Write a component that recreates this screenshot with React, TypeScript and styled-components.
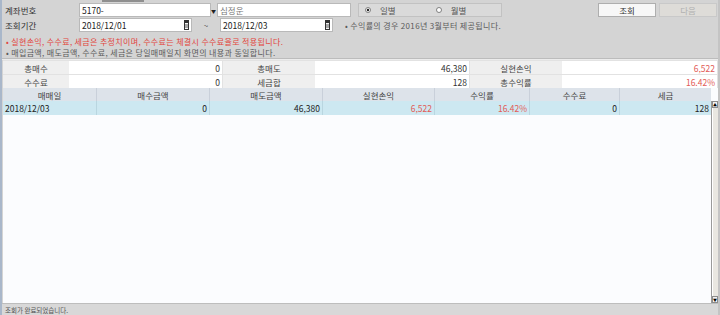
import React from "react";
import styled, { createGlobalStyle } from "styled-components";

const GlobalStyle = createGlobalStyle`
	html, body {
		margin: 0;
		padding: 0;
		background: #d4d4d4;
	}
	body {
		font-family: "Noto Sans CJK KR", "Noto Sans", sans-serif;
		font-size: 8px;
		color: #444;
	}
`;

const Window = styled.div`
	position: relative;
	width: 720px;
	height: 315px;
	display: flex;
	flex-direction: column;
	background: #d4d4d4;
	border-left: 2px solid #a9b7ca;
	border-right: 2px solid #c4c4c4;
	box-sizing: border-box;
	overflow: hidden;
`;

const TopTab = styled.div`
	position: absolute;
	top: 0;
	left: 100px;
	width: 42px;
	height: 2px;
	background: #8f8f8f;
`;

const TopPanel = styled.div`
	display: flex;
	flex-direction: column;
	padding: 3px 0 0 2px;
	height: 59px;
	flex-shrink: 0;
	border-bottom: 1px solid #bcbcbc;
	box-shadow: 0 1px 0 #ececec;
	box-sizing: border-box;
`;

const Row = styled.div`
	display: flex;
	align-items: center;
	height: 14px;
	margin-bottom: 1px;
`;

const Label = styled.div`
	width: 74px;
	font-size: 8.5px;
	color: #333;
	padding-left: 1px;
`;

const Input = styled.div<{ w: number; muted?: boolean }>`
	width: ${({ w }) => w}px;
	height: 14px;
	background: #fff;
	border: 1px solid #b9b9b9;
	box-sizing: border-box;
	display: flex;
	align-items: center;
	justify-content: space-between;
	padding: 0 2px;
	color: ${({ muted }) => (muted ? "#777" : "#222")};
	font-size: 8.5px;
`;

const DropBtn = styled.div`
	width: 5px;
	height: 14px;
	display: flex;
	align-items: center;
	justify-content: center;
	font-size: 5px;
	color: #222;
	margin-right: 1px;
`;

const RadioBox = styled.div`
	width: 144px;
	height: 14px;
	margin-left: 7px;
	background: #dadada;
	border: 1px solid #c2c2c2;
	box-sizing: border-box;
	display: flex;
	align-items: center;
	padding-left: 6px;
	gap: 40px;
`;

const Radio = styled.div`
	display: flex;
	align-items: center;
	gap: 9px;
	color: #555;
	font-size: 8.5px;
`;

const Spacer = styled.div`
	flex: 1;
`;

const Button = styled.div<{ disabled?: boolean }>`
	width: 58px;
	height: 14px;
	margin-left: 3px;
	box-sizing: border-box;
	border: 1px solid ${({ disabled }) => (disabled ? "#c9c9c9" : "#aeaeae")};
	background: ${({ disabled }) => (disabled ? "#dedcd8" : "#f7f7f7")};
	color: ${({ disabled }) => (disabled ? "#b0b0b0" : "#333")};
	display: flex;
	align-items: center;
	justify-content: center;
	font-size: 8.5px;
	&:last-child {
		margin-right: 1px;
	}
`;

const Tilde = styled.div`
	width: 28px;
	text-align: center;
	color: #555;
`;

const Note = styled.div<{ red?: boolean }>`
	color: ${({ red }) => (red ? "#e2453c" : "#5a5a5a")};
	font-size: 8px;
	line-height: 11px;
	letter-spacing: 0.35px;
	white-space: nowrap;
`;

const NoteLine = styled.div<{ first?: boolean }>`
	height: 11px;
	display: flex;
	align-items: center;
	padding-left: 2px;
	margin-top: ${({ first }) => (first ? 3 : 0)}px;
`;

const Summary = styled.div`
	display: grid;
	grid-template-columns: 66px 154px 92px 155px 92px 1fr;
	grid-auto-rows: 13px;
	gap: 1px 0;
	background: #e2e2e2;
	margin: 1px 0 0 1px;
	padding-top: 1px;
	flex-shrink: 0;
`;

const SumLabel = styled.div`
	background: #efefef;
	display: flex;
	align-items: center;
	justify-content: center;
	color: #444;
	font-size: 8.5px;
`;

const SumValue = styled.div<{ red?: boolean }>`
	background: #fff;
	display: flex;
	align-items: center;
	justify-content: flex-end;
	padding-right: 2px;
	color: ${({ red }) => (red ? "#e25a55" : "#333")};
	font-size: 8.5px;
	border-right: 1px solid #e2e2e2;
`;

const GridArea = styled.div`
	flex: 1;
	display: flex;
	margin-left: 1px;
	background: #fbfcfe;
	min-height: 0;
`;

const GridMain = styled.div`
	flex: 1;
	display: flex;
	flex-direction: column;
`;

const GridRow = styled.div<{ head?: boolean }>`
	display: grid;
	grid-template-columns: 94px 113px 113px 112px 95px 90px 1fr;
	height: ${({ head }) => (head ? 13 : 14)}px;
	background: ${({ head }) => (head ? "#dde3ea" : "#cde8f1")};
`;

const HeadCell = styled.div`
	display: flex;
	align-items: center;
	justify-content: center;
	border-right: 1px solid #c9d0da;
	color: #444;
	font-size: 8.5px;
	&:last-child {
		border-right: none;
	}
`;

const Cell = styled.div<{ left?: boolean; red?: boolean }>`
	display: flex;
	align-items: center;
	justify-content: ${({ left }) => (left ? "flex-start" : "flex-end")};
	padding: 0 2px;
	border-right: 1px solid #b9d6e0;
	color: ${({ red }) => (red ? "#e25a55" : "#222")};
	font-size: 8.5px;
	&:last-child {
		border-right: none;
	}
`;

const Scrollbar = styled.div`
	width: 6px;
	margin-top: 13px;
	display: flex;
	flex-direction: column;
	background: #dcd9d0;
	border-left: 1px solid #9a9a9a;
`;

const ScrollArrow = styled.div`
	height: 7px;
	background: #f2f2f2;
	border: 1px solid #8c8c8c;
	box-sizing: border-box;
	display: flex;
	align-items: center;
	justify-content: center;
	font-size: 4px;
	color: #000;
	line-height: 1;
`;

const ScrollTrack = styled.div`
	flex: 1;
	background: #e9e7e1;
	border-left: 1px solid #fff;
`;

const StatusBar = styled.div`
	height: 11px;
	flex-shrink: 0;
	display: flex;
	align-items: center;
	padding-left: 3px;
	border-top: 1px solid #bdbdbd;
	background: #d8d8d8;
	font-size: 6.5px;
	color: #555;
`;

const RadioIcon = ({ checked }: { checked?: boolean }) => (
	<svg width="6" height="6" viewBox="0 0 6 6">
		<circle cx="3" cy="3" r="2.5" fill="#fff" stroke="#666" strokeWidth="0.8" />
		{checked && <circle cx="3" cy="3" r="1.2" fill="#222" />}
	</svg>
);

const CalendarIcon = () => (
	<svg width="5" height="10" viewBox="0 0 5 10">
		<rect x="0.5" y="0.5" width="4" height="9" fill="#f4f4f4" stroke="#333" strokeWidth="1" />
		<rect x="0" y="0" width="5" height="3" fill="#333" />
		<line x1="1" y1="5" x2="4" y2="5" stroke="#333" strokeWidth="0.8" />
		<line x1="1" y1="7" x2="4" y2="7" stroke="#333" strokeWidth="0.8" />
	</svg>
);

const summary = [
	["총매수", "0", "총매도", "46,380", "실현손익", "6,522"],
	["수수료", "0", "세금합", "128", "총수익률", "16.42%"],
];

const columns = ["매매일", "매수금액", "매도금액", "실현손익", "수익률", "수수료", "세금"];

const rows = [
	{ date: "2018/12/03", buy: "0", sell: "46,380", profit: "6,522", rate: "16.42%", fee: "0", tax: "128" },
];

export default function App() {
	return (
		<>
			<GlobalStyle />
			<Window>
				<TopTab />
				<TopPanel>
					<Row>
						<Label>계좌번호</Label>
						<Input w={132}>5170-</Input>
						<DropBtn>▼</DropBtn>
						<Input w={134} muted>
							심정운
						</Input>
						<RadioBox>
							<Radio>
								<RadioIcon checked />
								일별
							</Radio>
							<Radio>
								<RadioIcon />
								월별
							</Radio>
						</RadioBox>
						<Spacer />
						<Button>조회</Button>
						<Button disabled>다음</Button>
					</Row>
					<Row>
						<Label>조회기간</Label>
						<Input w={113}>
							2018/12/01
							<CalendarIcon />
						</Input>
						<Tilde>~</Tilde>
						<Input w={113}>
							2018/12/03
							<CalendarIcon />
						</Input>
						<Note style={{ marginLeft: 12 }}>• 수익률의 경우 2016년 3월부터 제공됩니다.</Note>
					</Row>
					<NoteLine first>
						<Note red>• 실현손익, 수수료, 세금은 추정치이며, 수수료는 체결시 수수료율로 적용됩니다.</Note>
					</NoteLine>
					<NoteLine>
						<Note>• 매입금액, 매도금액, 수수료, 세금은 당일매매일지 화면의 내용과 동일합니다.</Note>
					</NoteLine>
				</TopPanel>
				<Summary>
					{summary.map((r, i) => (
						<React.Fragment key={i}>
							<SumLabel>{r[0]}</SumLabel>
							<SumValue>{r[1]}</SumValue>
							<SumLabel>{r[2]}</SumLabel>
							<SumValue>{r[3]}</SumValue>
							<SumLabel>{r[4]}</SumLabel>
							<SumValue red>{r[5]}</SumValue>
						</React.Fragment>
					))}
				</Summary>
				<GridArea>
					<GridMain>
						<GridRow head>
							{columns.map((c) => (
								<HeadCell key={c}>{c}</HeadCell>
							))}
						</GridRow>
						{rows.map((r) => (
							<GridRow key={r.date}>
								<Cell left>{r.date}</Cell>
								<Cell>{r.buy}</Cell>
								<Cell>{r.sell}</Cell>
								<Cell red>{r.profit}</Cell>
								<Cell red>{r.rate}</Cell>
								<Cell>{r.fee}</Cell>
								<Cell>{r.tax}</Cell>
							</GridRow>
						))}
					</GridMain>
					<Scrollbar>
						<ScrollArrow>▲</ScrollArrow>
						<ScrollTrack />
						<ScrollArrow>▼</ScrollArrow>
					</Scrollbar>
				</GridArea>
				<StatusBar>조회가 완료되었습니다.</StatusBar>
			</Window>
		</>
	);
}
